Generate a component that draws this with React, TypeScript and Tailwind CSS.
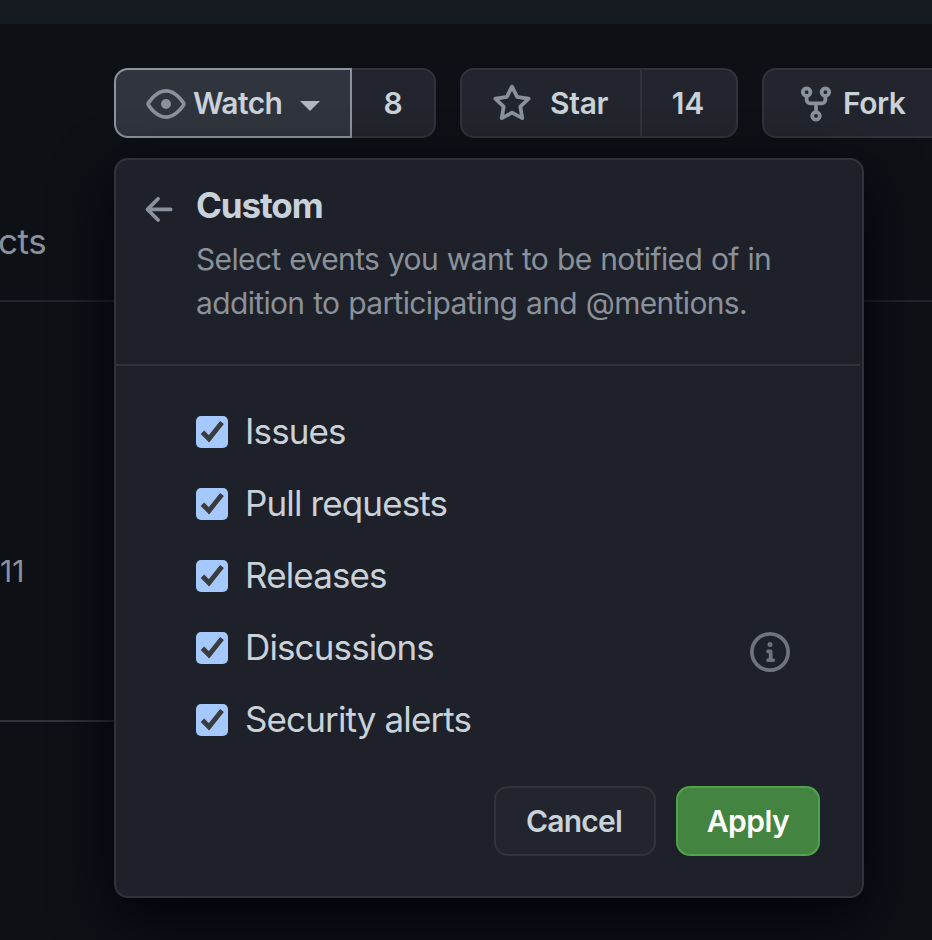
import React from "react";

const paths = {
  eye: "M1.679 7.932c.412-.621 1.242-1.75 2.366-2.717C5.175 4.242 6.527 3.5 8 3.5c1.473 0 2.824.742 3.955 1.715 1.124.967 1.954 2.096 2.366 2.717a.119.119 0 010 .136c-.412.621-1.242 1.75-2.366 2.717C10.825 11.758 9.473 12.5 8 12.5c-1.473 0-2.824-.742-3.955-1.715C2.92 9.818 2.09 8.69 1.679 8.068a.119.119 0 010-.136zM8 2c-1.981 0-3.67.992-4.933 2.078C1.797 5.169.88 6.423.43 7.1a1.619 1.619 0 000 1.798c.45.678 1.367 1.932 2.637 3.024C4.329 13.008 6.019 14 8 14c1.981 0 3.67-.992 4.933-2.078 1.27-1.091 2.187-2.345 2.637-3.023a1.619 1.619 0 000-1.798c-.45-.678-1.367-1.932-2.637-3.023C11.671 2.992 9.981 2 8 2zm0 8a2 2 0 100-4 2 2 0 000 4z",
  star: "M8 .25a.75.75 0 01.673.418l1.882 3.815 4.21.612a.75.75 0 01.416 1.279l-3.046 2.97.719 4.192a.75.75 0 01-1.088.791L8 12.347l-3.766 1.98a.75.75 0 01-1.088-.79l.72-4.194L.818 6.374a.75.75 0 01.416-1.28l4.21-.611L7.327.668A.75.75 0 018 .25zm0 2.445L6.615 5.5a.75.75 0 01-.564.41l-3.097.45 2.24 2.184a.75.75 0 01.216.664l-.528 3.084 2.769-1.456a.75.75 0 01.698 0l2.77 1.456-.53-3.084a.75.75 0 01.216-.664l2.24-2.183-3.096-.45a.75.75 0 01-.564-.41L8 2.694z",
  fork: "M5 3.25a.75.75 0 11-1.5 0 .75.75 0 011.5 0zm0 2.122a2.25 2.25 0 10-1.5 0v.878A2.25 2.25 0 005.75 8.5h1.5v2.128a2.251 2.251 0 101.5 0V8.5h1.5a2.25 2.25 0 002.25-2.25v-.878a2.25 2.25 0 10-1.5 0v.878a.75.75 0 01-.75.75h-4.5A.75.75 0 015 6.25v-.878zm3.75 7.378a.75.75 0 11-1.5 0 .75.75 0 011.5 0zm3-8.75a.75.75 0 100-1.5.75.75 0 000 1.5z",
  arrow: "M7.78 12.53a.75.75 0 01-1.06 0L2.47 8.28a.75.75 0 010-1.06l4.25-4.25a.75.75 0 011.06 1.06L4.81 7h7.44a.75.75 0 010 1.5H4.81l2.97 2.97a.75.75 0 010 1.06z",
  info: "M8 1.5a6.5 6.5 0 100 13 6.5 6.5 0 000-13zM0 8a8 8 0 1116 0A8 8 0 010 8zm6.5-.25A.75.75 0 017.25 7h1a.75.75 0 01.75.75v2.75h.25a.75.75 0 010 1.5h-2a.75.75 0 010-1.5h.25v-2h-.25a.75.75 0 01-.75-.75zM8 6a1 1 0 100-2 1 1 0 000 2z",
};

function Icon({ name, className = "" }: { name: keyof typeof paths; className?: string }) {
  return (
    <svg viewBox="0 0 16 16" fill="currentColor" fillRule="evenodd" className={`size-10 shrink-0 ${className}`}>
      <path d={paths[name]} />
    </svg>
  );
}

const events = [
  { label: "Issues" },
  { label: "Pull requests" },
  { label: "Releases" },
  { label: "Discussions", info: true },
  { label: "Security alerts" },
];

function Toolbar() {
  return (
    <div className="ml-[114px] mt-11 flex h-[70px] w-[918px] text-[30px] font-semibold leading-[67px] text-[#c9d1d9]">
      <button className="flex w-[238px] items-center rounded-l-[14px] border-2 border-[#8b949e] bg-[#30343c] pl-[30px]">
        <Icon name="eye" className="mt-0.5 text-[#8b919c]" />
        <span className="ml-[7px] tracking-[-0.6px]">Watch</span>
        <svg viewBox="0 0 20 10" className="ml-[18px] mt-1.5 h-2.5 w-5" fill="#b1b6bf">
          <path d="M0 0h20L10 10z" />
        </svg>
      </button>
      <span className="w-[84px] rounded-r-[14px] border-2 border-l-0 border-[#30343a] bg-[#22252d] text-center">8</span>
      <button className="ml-6 flex w-[182px] items-center rounded-l-[14px] border-2 border-[#30343a] bg-[#22252d] pl-[30px]">
        <Icon name="star" className="mt-0.5 text-[#8b919c]" />
        <span className="ml-[18px] tracking-[-0.3px]">Star</span>
      </button>
      <span className="w-24 rounded-r-[14px] border-2 border-l-0 border-[#30343a] bg-[#22252d] pr-0.5 text-center">14</span>
      <button className="ml-6 flex w-[240px] items-center rounded-l-[14px] border-2 border-[#30343a] bg-[#22252d] pl-8">
        <Icon name="fork" className="mt-0.5 text-[#8b919c]" />
        <span className="ml-[7px] tracking-[-0.5px]">Fork</span>
      </button>
    </div>
  );
}

function Checkbox() {
  return (
    <span className="flex size-8 shrink-0 rounded-[5px] bg-[#a5c8fd]">
      <svg viewBox="0 0 32 32" className="size-8" fill="none" stroke="#3b3b3b" strokeWidth="4.8">
        <path d="M6.4 16.2L13 22.8L26 6.4" />
      </svg>
    </span>
  );
}

function WatchMenu() {
  return (
    <div className="absolute left-[114px] top-[158px] flex h-[740px] w-[750px] flex-col rounded-[14px] border-2 border-[#30343a] bg-[#1e2129] shadow-[0_20px_60px_#010409]">
      <div className="flex h-[206px] w-[744px] border-b-2 border-[#30343a] pl-6 pt-[22px]">
        <Icon name="arrow" className="mt-2 text-[#8b919c]" />
        <div className="ml-4">
          <h2 className="text-[35px] font-bold leading-[46px] tracking-[-1.1px] text-[#c9d1d9]">Custom</h2>
          <p className="mt-[9px] whitespace-nowrap text-[30px] leading-[44px] tracking-[-0.65px] [word-spacing:1px] text-[#8b919a]">
            Select events you want to be notified of in
            <br />
            addition to participating and @mentions.
          </p>
        </div>
      </div>
      <div className="flex flex-col pl-20 pr-[72px] pt-[30px]">
        {events.map((event) => (
          <label key={event.label} className="flex h-[72px] items-center">
            <Checkbox />
            <span className="-mt-0.5 ml-[17px] text-[35px] leading-[70px] tracking-[-0.87px] text-[#c9d1d9]">{event.label}</span>
            {event.info && <Icon name="info" className="ml-auto mt-2 text-[#6e737d]" />}
          </label>
        ))}
      </div>
      <div className="mr-[42px] mt-[30px] flex justify-end gap-5 text-[30px] font-semibold leading-[66px]">
        <button className="h-[70px] w-[162px] rounded-[14px] border-2 border-[#30343a] bg-[#22252d] pr-0.5 tracking-[-0.8px] text-[#c9d1d9]">Cancel</button>
        <button className="h-[70px] w-36 rounded-[14px] border-2 border-[#4fa34b] bg-[#438440] tracking-[-0.5px] text-white">Apply</button>
      </div>
    </div>
  );
}

export default function App() {
  return (
    <div className="relative h-[940px] w-[932px] overflow-hidden bg-[#0d1116] font-[Inter,sans-serif]">
      <div className="h-6 bg-[#161b22]" />
      <Toolbar />
      <div className="flex h-[164px] border-b-2 border-[#21262d] pt-[79px] text-[35px] leading-[48px] text-[#8b919c]">
        <span className="-ml-[2px] tracking-[-0.4px]">cts</span>
      </div>
      <div className="h-[420px] w-[840px] border-b-2 border-[#30343a] pt-[245px] text-[30px] leading-[48px] text-[#8b919c]">
        <span>11</span>
      </div>
      <WatchMenu />
    </div>
  );
}
